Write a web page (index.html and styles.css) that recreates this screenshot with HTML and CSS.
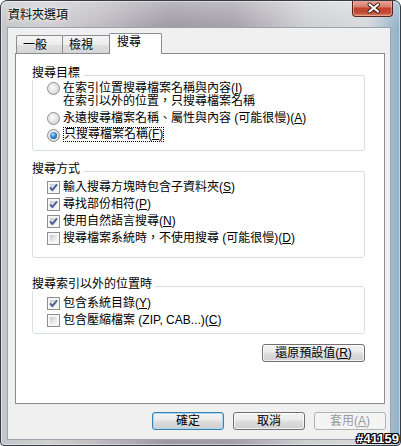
FILE: index.html
```html
<!DOCTYPE html>
<html lang="zh-Hant">
<head>
    <meta charset="UTF-8">
    <meta name="viewport" content="width=device-width, initial-scale=1.0">
    <title>資料夾選項</title>
    <link rel="stylesheet" href="styles.css">
</head>
<body>

<div class="window">
    <div class="titlebar">
        <span class="title">資料夾選項</span>
        <button type="button" class="close" aria-label="關閉">
            <svg width="41" height="16" viewBox="0 0 41 16">
                <path d="M16.5 4.5 L25 11.5 M25 4.5 L16.5 11.5" stroke="#3a1a14" stroke-width="4" stroke-linecap="round"/>
                <path d="M16.5 4.5 L25 11.5 M25 4.5 L16.5 11.5" stroke="#fff" stroke-width="2.2" stroke-linecap="round"/>
            </svg>
        </button>
    </div>

    <div class="client">
        <div class="tabs">
            <div class="tab">一般</div>
            <div class="tab second">檢視</div>
            <div class="tab active">搜尋</div>
        </div>

        <div class="panel">
            <!-- 搜尋目標 -->
            <div class="group first">
                <div class="group-title">搜尋目標</div>
                <div class="options top">
                    <div class="option multi">
                        <span class="rb"></span>
                        <span>在索引位置搜尋檔案名稱與內容(<u>I</u>)<br>在索引以外的位置，只搜尋檔案名稱</span>
                    </div>
                    <div class="option">
                        <span class="rb"></span>
                        <span>永遠搜尋檔案名稱、屬性與內容 (可能很慢)(<u>A</u>)</span>
                    </div>
                    <div class="option">
                        <span class="rb on"></span>
                        <span class="focus">只搜尋檔案名稱(<u>F</u>)</span>
                    </div>
                </div>
            </div>

            <!-- 搜尋方式 -->
            <div class="group second">
                <div class="group-title">搜尋方式</div>
                <div class="options">
                    <div class="option">
                        <span class="cb"><svg width="11" height="11" viewBox="0 0 11 11"><path d="M2 5.3 L4.4 8 L9 2.3" fill="none" stroke="#4b5f94" stroke-width="1.9"/></svg></span>
                        <span>輸入搜尋方塊時包含子資料夾(<u>S</u>)</span>
                    </div>
                    <div class="option">
                        <span class="cb"><svg width="11" height="11" viewBox="0 0 11 11"><path d="M2 5.3 L4.4 8 L9 2.3" fill="none" stroke="#4b5f94" stroke-width="1.9"/></svg></span>
                        <span>尋找部份相符(<u>P</u>)</span>
                    </div>
                    <div class="option">
                        <span class="cb"><svg width="11" height="11" viewBox="0 0 11 11"><path d="M2 5.3 L4.4 8 L9 2.3" fill="none" stroke="#4b5f94" stroke-width="1.9"/></svg></span>
                        <span>使用自然語言搜尋(<u>N</u>)</span>
                    </div>
                    <div class="option">
                        <span class="cb"></span>
                        <span>搜尋檔案系統時，不使用搜尋 (可能很慢)(<u>D</u>)</span>
                    </div>
                </div>
            </div>

            <!-- 搜尋索引以外的位置時 -->
            <div class="group third">
                <div class="group-title">搜尋索引以外的位置時</div>
                <div class="options last">
                    <div class="option">
                        <span class="cb"><svg width="11" height="11" viewBox="0 0 11 11"><path d="M2 5.3 L4.4 8 L9 2.3" fill="none" stroke="#4b5f94" stroke-width="1.9"/></svg></span>
                        <span>包含系統目錄(<u>Y</u>)</span>
                    </div>
                    <div class="option">
                        <span class="cb"></span>
                        <span>包含壓縮檔案 (ZIP, CAB...)(<u>C</u>)</span>
                    </div>
                </div>
            </div>

            <div class="panel-footer">
                <button type="button" class="btn wide">還原預設值(<u>R</u>)</button>
            </div>
        </div>

        <div class="actions">
            <button type="button" class="btn default">確定</button>
            <button type="button" class="btn">取消</button>
            <button type="button" class="btn" disabled>套用(<u>A</u>)</button>
        </div>
    </div>

    <span class="tag">#41159</span>
</div>

</body>
</html>
```

FILE: styles.css
```css
* {
    box-sizing: border-box;
}
body {
    margin: 0;
    font-family: "Liberation Sans", "Noto Sans CJK TC", sans-serif;
    font-size: 12px;
    color: #000;
}
.window {
    position: relative;
    width: 401px;
    height: 446px;
    border: 1px solid #353c45;
    border-radius: 7px 7px 4px 4px;
    padding: 0 9px 5px 6px;
    display: flex;
    flex-direction: column;
    overflow: hidden;
    background:
        linear-gradient(to bottom, rgba(255, 255, 255, 0.3), rgba(255, 255, 255, 0) 28px),
        linear-gradient(to right, #c4c5c9 0%, #cfcfd2 12%, #bdbbc0 25%, #9d98a2 42%, #a49fa8 58%, #cdced1 76%, #d6d9dc 92%, #8fb0c6 100%);
    box-shadow: inset 0 0 0 1px rgba(255, 255, 255, 0.45);
}
.titlebar {
    flex: none;
    height: 26px;
    display: flex;
    justify-content: space-between;
    align-items: flex-start;
}
.title {
    margin: 7px 0 0 1px;
    line-height: 14px;
    text-shadow: 0 0 4px #fff, 0 0 2px #fff;
}
.close {
    display: block;
    width: 41px;
    height: 17px;
    margin: -1px -2px 0 0;
    padding: 0;
    border: 1px solid #5a2219;
    border-top: none;
    border-radius: 0 0 4px 4px;
    background: linear-gradient(#e8ab9c, #d7826f 40%, #c4442e 52%, #c04a34 78%, #d9886a);
    box-shadow: inset 0 0 0 1px rgba(255, 215, 200, 0.45);
}
.close svg {
    display: block;
}
.client {
    flex: 1;
    display: flex;
    flex-direction: column;
    background: #f0f0f0;
    border: 1px solid #9aa4ae;
}
.tabs {
    flex: none;
    display: flex;
    align-items: flex-end;
    height: 20px;
    margin-top: 5px;
    padding-left: 8px;
}
.tab {
    width: 47px;
    height: 18px;
    padding: 2px 0 0 6px;
    line-height: 14px;
    border: 1px solid #898c95;
    border-bottom: none;
    border-radius: 2px 2px 0 0;
    background: linear-gradient(#f5f5f5, #ececec 50%, #dfdfdf 51%, #d6d6d6);
}
.tab.second {
    width: 48px;
    margin-left: -1px;
    padding-left: 6px;
}
.tab.active {
    position: relative;
    z-index: 1;
    width: 53px;
    height: 21px;
    margin: 0 0 -1px -1px;
    padding: 1px 0 0 7px;
    background: #fff;
}
.panel {
    flex: none;
    width: 370px;
    height: 351px;
    margin-left: 7px;
    padding: 21px 19px 0 16px;
    border: 1px solid #898c95;
    background: #fff;
}
.group {
    border: 1px solid #d5dfe5;
    border-radius: 3px;
}
.group.second {
    margin-top: 20px;
}
.group.third {
    margin-top: 28px;
}
.group-title {
    display: table;
    margin: -10px 0 0 -1px;
    padding-right: 3px;
    line-height: 14px;
    background: #fff;
}
.options {
    display: flex;
    flex-direction: column;
    gap: 3px;
    padding: 4px 0 12px 14px;
}
.options.top {
    gap: 3px;
    padding: 2px 0 8px 14px;
}
.options.last {
    padding: 5px 0 6px 14px;
}
.option {
    display: flex;
    align-items: flex-start;
    gap: 3px;
    line-height: 14px;
}
.option.multi {
    line-height: 13px;
}
.rb {
    flex: none;
    display: flex;
    align-items: center;
    justify-content: center;
    width: 13px;
    height: 13px;
    margin-top: 1px;
    border: 1px solid #8e8f8f;
    border-radius: 50%;
    background: radial-gradient(circle at 40% 40%, #fbfbfb 0, #e6e6e6 45%, #c9c9c9 100%);
}
.option.multi .rb {
    margin-top: 0;
}
.rb.on::after {
    content: "";
    width: 7px;
    height: 7px;
    border-radius: 50%;
    background: radial-gradient(circle at 40% 35%, #b5e2ff 0, #3b93dc 40%, #0c3f80 100%);
}
.cb {
    flex: none;
    width: 13px;
    height: 13px;
    margin-top: 1px;
    padding: 2px;
    border: 1px solid #8e8f8f;
    background: linear-gradient(135deg, #c4c8ce, #e8eaec 60%, #f6f6f6) content-box, #f7f7f7;
}
.cb svg {
    display: block;
    margin: -2px;
}
.focus {
    display: inline-block;
    margin-left: 1px;
    line-height: 13px;
    outline: 1px dotted #000;
}
.panel-footer {
    display: flex;
    justify-content: flex-end;
    margin-top: 10px;
}
.actions {
    flex: none;
    display: flex;
    justify-content: flex-end;
    gap: 9px;
    margin-top: 8px;
    padding-right: 4px;
}
.btn {
    width: 72px;
    height: 18px;
    padding: 0;
    font: inherit;
    line-height: 14px;
    color: #000;
    border: 1px solid #707070;
    border-radius: 3px;
    background: linear-gradient(#f3f3f3, #ebebeb 45%, #dddddd 50%, #cfcfcf);
    box-shadow: inset 0 0 0 1px rgba(255, 255, 255, 0.75);
}
.btn.wide {
    width: 103px;
}
.btn.default {
    border-color: #3c7fb1;
    box-shadow: inset 0 0 0 1px #a6d6f2;
}
.btn[disabled] {
    color: #9a9a9a;
    border-color: #adb2b5;
    background: #f4f4f4;
    box-shadow: none;
}
.tag {
    position: absolute;
    right: 1px;
    bottom: 0;
    font: bold 13px/13px "Liberation Sans", sans-serif;
    color: #fff;
    text-shadow: -1px -1px 0 #000, 1px -1px 0 #000, -1px 1px 0 #000, 1px 1px 0 #000,
        0 1px 0 #000, 1px 0 0 #000, -1px 0 0 #000, 0 -1px 0 #000;
}
```
